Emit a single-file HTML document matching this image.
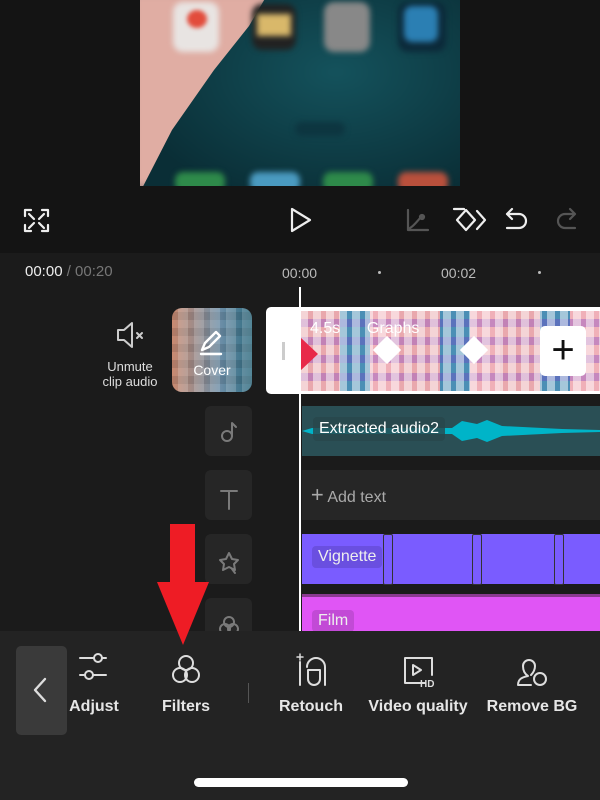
<!DOCTYPE html><html><head><style>
body{margin:0;width:600px;height:800px;background:#141414;position:relative;overflow:hidden;font-family:"Liberation Sans",sans-serif;color:#fff}
.a{position:absolute}
.ic{fill:none;stroke-width:2.4;stroke-linecap:round;stroke-linejoin:round}
.lbl{font-size:16px;font-weight:bold;color:#e6e6e6;text-align:center}
.sb{position:absolute;left:205px;width:47px;height:50px;background:#262626;border-radius:6px}
</style></head><body>
<div class="a" style="left:140px;top:0;width:320px;height:186px;overflow:hidden;background:#0d3a44">
 <div class="a" style="left:-20px;top:-20px;width:360px;height:230px;background:radial-gradient(ellipse at 60% 40%,#14525c,#0a2e36 70%);filter:blur(3px)"></div>
 <div class="a" style="left:-10px;top:-10px;width:140px;height:200px;background:#e0ada3;clip-path:polygon(0 0,100% 0,85% 18%,60% 40%,30% 70%,8% 100%,0 100%);filter:blur(5px)"></div>
 <div class="a" style="left:33px;top:2px;width:46px;height:50px;background:#e8e4e2;border-radius:10px;filter:blur(3px)"></div>
 <div class="a" style="left:47px;top:10px;width:20px;height:18px;background:#e24c3c;border-radius:50%;filter:blur(2px)"></div>
 <div class="a" style="left:112px;top:4px;width:44px;height:46px;background:#222;border-radius:10px;filter:blur(3px)"></div>
 <div class="a" style="left:117px;top:14px;width:34px;height:22px;background:#d9b86a;filter:blur(3px)"></div>
 <div class="a" style="left:184px;top:2px;width:46px;height:50px;background:#888;border-radius:10px;filter:blur(3px)"></div>
 <div class="a" style="left:258px;top:2px;width:48px;height:50px;background:#0c2a3a;border-radius:10px;filter:blur(3px)"></div>
 <div class="a" style="left:264px;top:6px;width:34px;height:36px;background:#2b7fb3;border-radius:8px;filter:blur(3px)"></div>
 <div class="a" style="left:155px;top:122px;width:50px;height:14px;background:#0d3540;border-radius:8px;filter:blur(3px)"></div>
 <div class="a" style="left:35px;top:172px;width:50px;height:20px;background:#2e8a4a;border-radius:8px;filter:blur(3px)"></div>
 <div class="a" style="left:110px;top:172px;width:50px;height:20px;background:#4a9ac0;border-radius:8px;filter:blur(3px)"></div>
 <div class="a" style="left:183px;top:172px;width:50px;height:20px;background:#2e8a4a;border-radius:8px;filter:blur(3px)"></div>
 <div class="a" style="left:258px;top:172px;width:50px;height:20px;background:#b9503c;border-radius:8px;filter:blur(3px)"></div>
</div>
<svg class="a" style="left:0;top:195px" width="600" height="50">
 <g class="ic" style="stroke-width:2.2"><path d="M25 21v-6h6M42 15h6v6M25 30v6h6M48 30v6h-6M29 19l5 5M44 19l-5 5M29 33l5-5M44 33l-5-5" style="stroke:#eee"/>
 <path d="M292 14v22l18-11z" style="stroke:#eee"/>
 <path d="M408 15v20h20M410 33c4-2 8-8 12-12" style="stroke:#555"/><circle cx="422" cy="22" r="2" style="fill:#555;stroke:#555"/>
 <path d="M454 14h10M466 15l9 10-9 10-9-10zM477 16l8 9-8 9" style="stroke:#eee"/>
 <path d="M512 14l-5 5 5 5M507 19h12a7 7 0 010 14h-12" style="stroke:#eee"/>
 <path d="M570 14l5 5-5 5M575 19h-10a7 7 0 000 14h10" style="stroke:#555"/></g>
</svg>
<div class="a" style="left:0;top:253px;width:600px;height:380px;background:#1b1b1b"></div>
<div class="a" style="left:25px;top:263px;font-size:15px;color:#eee">00:00 <span style="color:#777">/ 00:20</span></div>
<div class="a" style="left:282px;top:265px;font-size:14px;color:#bbb">00:00</div>
<div class="a" style="left:441px;top:265px;font-size:14px;color:#bbb">00:02</div>
<div class="a" style="left:378px;top:271px;width:3px;height:3px;background:#bbb;border-radius:50%"></div>
<div class="a" style="left:538px;top:271px;width:3px;height:3px;background:#bbb;border-radius:50%"></div>
<svg class="a" style="left:115px;top:320px" width="34" height="30"><g class="ic" style="stroke-width:2;stroke:#ccc"><path d="M3 10h6l8-7v24l-8-7H3z"/><path d="M22 13l5 5M27 13l-5 5"/></g></svg>
<div class="a" style="left:95px;top:359px;width:70px;font-size:13px;color:#ddd;text-align:center;line-height:15px">Unmute<br>clip audio</div>
<div class="a" style="left:172px;top:308px;width:80px;height:84px;border-radius:10px;overflow:hidden;background:linear-gradient(90deg,#c98a70,#6d8fa8 60%,#2e6b80)">
 <div class="a" style="left:0;top:0;right:0;bottom:0;background:repeating-linear-gradient(90deg,transparent 0 6px,rgba(255,255,255,.25) 6px 16px),repeating-linear-gradient(0deg,transparent 0 8px,rgba(0,0,0,.15) 8px 16px);opacity:.7"></div>
 <svg class="a" style="left:26px;top:20px" width="28" height="28"><path class="ic" style="stroke:#fff" d="M4 22l3-7 11-11 4 4-11 11zM3 26h20"/></svg>
 <div class="a" style="left:0;width:80px;top:54px;font-size:14px;text-align:center">Cover</div>
</div>
<div class="a" style="left:266px;top:307px;width:340px;height:87px;background:#fff;border-radius:5px"></div>
<div class="a" style="left:282px;top:342px;width:3px;height:18px;background:#ccc"></div>
<div class="a" style="left:300px;top:311px;width:300px;height:80px;background:repeating-linear-gradient(90deg,#e9a8ad 0 40px,#4b8fb5 40px 70px,#f0b0b8 70px 100px);overflow:hidden">
 <div class="a" style="left:0;top:0;right:0;bottom:0;background:repeating-linear-gradient(90deg,rgba(255,255,255,.5) 0 8px,transparent 8px 13px),repeating-linear-gradient(0deg,transparent 0 10px,rgba(120,60,200,.35) 10px 18px)"></div>
</div>
<div class="a" style="left:300px;top:337px;width:0;height:0;border-top:17px solid transparent;border-bottom:17px solid transparent;border-left:18px solid #e8294a"></div>
<div class="a" style="left:377px;top:340px;width:20px;height:20px;background:#fff;transform:rotate(45deg)"></div>
<div class="a" style="left:464px;top:340px;width:20px;height:20px;background:#fff;transform:rotate(45deg)"></div>
<div class="a" style="left:310px;top:320px;font-size:16px;color:#fff">4.5s &nbsp;&nbsp;&nbsp;&nbsp; Graphs</div>
<div class="a" style="left:540px;top:326px;width:46px;height:50px;background:#fff;border-radius:5px;font-size:40px;color:#111;text-align:center;line-height:48px">+</div>
<div class="sb" style="top:406px"></div><div class="sb" style="top:470px"></div><div class="sb" style="top:534px"></div><div class="sb" style="top:598px"></div>
<svg class="a" style="left:205px;top:406px" width="47" height="230"><g class="ic" style="stroke:#7a7a7a;stroke-width:2"><circle cx="22" cy="30" r="5"/><path d="M27 30V17l4 4"/><path d="M16 85h16M24 85v18"/><path d="M24 147l3 6 6 1-4 4 1 6-6-3-6 3 1-6-4-4 6-1zM27 163l3 4"/><circle cx="24" cy="216" r="5"/><circle cx="20" cy="223" r="5"/><circle cx="28" cy="223" r="5"/></g></svg>
<div class="a" style="left:302px;top:406px;width:298px;height:50px;background:#2a4f55"></div>
<svg class="a" style="left:302px;top:406px" width="298" height="50"><path d="M0 25 L10 22 L150 22 L160 15 L175 18 L185 14 L200 20 L260 23 L298 24 L298 26 L260 27 L200 30 L185 36 L175 32 L160 35 L150 28 L10 28 Z" fill="#00b4c8"/></svg>
<div class="a" style="left:313px;top:417px;padding:3px 6px;background:rgba(40,70,75,.8);border-radius:4px;font-size:16px">Extracted audio2</div>
<div class="a" style="left:302px;top:470px;width:298px;height:50px;background:#262626;font-size:16px;color:#aaa;line-height:50px">&nbsp;&nbsp;<span style="font-size:22px">+</span> Add text</div>
<div class="a" style="left:302px;top:534px;width:298px;height:50px;background:#7a5cff"></div>
<div class="a" style="left:383px;top:534px;width:8px;height:49px;border:1px solid #333;border-radius:2px"></div>
<div class="a" style="left:472px;top:534px;width:8px;height:49px;border:1px solid #333;border-radius:2px"></div>
<div class="a" style="left:554px;top:534px;width:8px;height:49px;border:1px solid #333;border-radius:2px"></div>
<div class="a" style="left:312px;top:546px;padding:2px 6px;background:#6a4fe0;border-radius:4px;font-size:16px;color:#eee">Vignette</div>
<div class="a" style="left:302px;top:594px;width:298px;height:40px;background:#e055f5;border-top:3px solid #8a3a90"></div>
<div class="a" style="left:312px;top:610px;padding:2px 6px;background:#c24ad6;border-radius:4px;font-size:16px;color:#eee">Film</div>
<div class="a" style="left:299px;top:287px;width:2px;height:345px;background:#fff"></div>
<div class="a" style="left:0;top:631px;width:600px;height:169px;background:#232323"></div>
<div class="a" style="left:16px;top:646px;width:51px;height:89px;background:#3a3a3a;border-radius:5px"></div>
<svg class="a" style="left:30px;top:675px" width="20" height="30"><path class="ic" style="stroke:#ddd" d="M15 4L5 15l10 11"/></svg>
<svg class="a" style="left:0;top:650px" width="600" height="45"><g class="ic" style="stroke:#ddd;stroke-width:2"><path d="M80 8h26M80 25h26"/><circle cx="98" cy="8" r="4" style="fill:#232323"/><circle cx="89" cy="25" r="4" style="fill:#232323"/>
<circle cx="186" cy="13" r="7"/><circle cx="180" cy="25" r="7"/><circle cx="192" cy="25" r="7"/>
<path d="M300 35V12M325 35V17a9 9 0 00-18 0M308 20h12v9a6 6 0 01-12 0z"/><path d="M300 4v6M297 7h6" style="stroke-width:1.5"/>
<path d="M425 33h-20V8h27v17M413 15v10l8-5z"/>
<path d="M518 35c0-7 6-8 10-9-3-2-5-5-5-10a6 6 0 0112 0c0 4-2 7-4 9M518 35h13"/><circle cx="540" cy="29" r="6"/></g>
<text x="420" y="37" font-size="10" font-weight="bold" fill="#ddd" font-family="Liberation Sans">HD</text></svg>
<div class="a" style="left:248px;top:683px;width:1px;height:20px;background:#555"></div>
<div class="a lbl" style="left:60px;top:698px;width:68px">Adjust</div>
<div class="a lbl" style="left:150px;top:698px;width:72px">Filters</div>
<div class="a lbl" style="left:270px;top:698px;width:82px">Retouch</div>
<div class="a lbl" style="left:362px;top:698px;width:112px">Video quality</div>
<div class="a lbl" style="left:482px;top:698px;width:100px">Remove BG</div>
<div class="a" style="left:194px;top:778px;width:214px;height:9px;background:#fff;border-radius:5px"></div>
<div class="a" style="left:170px;top:524px;width:25px;height:60px;background:#ee1c25"></div>
<svg class="a" style="left:155px;top:582px" width="56" height="64"><path d="M2 0h52L28 63z" fill="#ee1c25"/></svg>
</body></html>
